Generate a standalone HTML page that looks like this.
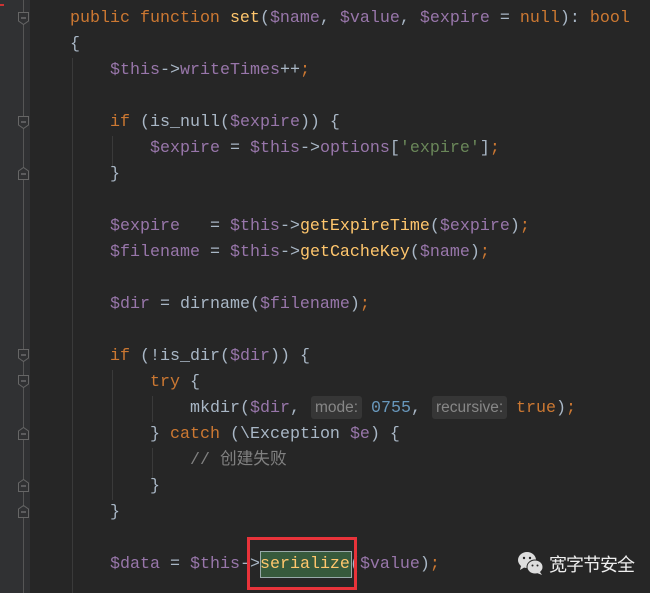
<!DOCTYPE html>
<html><head><meta charset="utf-8">
<style>
html,body{margin:0;padding:0}
body{width:650px;height:593px;background:#262626;position:relative;overflow:hidden;font-family:"Liberation Mono","Noto Sans CJK SC",monospace;font-size:16.67px;color:#a9b7c6}
.gut{position:absolute;left:0;top:0;width:30px;height:593px;background:#303133}
.fl{position:absolute;left:23px;top:0;width:1px;height:593px;background:#555}
.fm{position:absolute;left:18px;width:11px;height:13px}
.ig{position:absolute;width:1px;background:#3a3a3a}
.l{position:absolute;white-space:pre;height:26px;line-height:26px}
.k{color:#cc7832}.f{color:#ffc66d}.v{color:#9876aa}.s{color:#6a8759}.n{color:#6897bb}.c{color:#808080}
.h{display:inline-block;background:#363636;color:#878787;font-family:"Liberation Sans",sans-serif;font-size:15.5px;line-height:23px;padding:0 4px;border-radius:3px}
</style></head><body>
<div class="gut"></div>
<div class="fl"></div>
<svg width="0" height="0" style="position:absolute"><defs><g id="fo"><path d="M0.5 0.5H10.5V9L5.5 12.5L0.5 9Z" fill="#303133" stroke="#666"/><path d="M3 6H8" stroke="#888"/></g><g id="fc"><path d="M0.5 12.5H10.5V4L5.5 0.5L0.5 4Z" fill="#303133" stroke="#666"/><path d="M3 7H8" stroke="#888"/></g></defs></svg>
<svg class="fm" style="top:12px"><use href="#fo"/></svg>
<svg class="fm" style="top:116px"><use href="#fo"/></svg>
<svg class="fm" style="top:167px"><use href="#fc"/></svg>
<svg class="fm" style="top:349px"><use href="#fo"/></svg>
<svg class="fm" style="top:375px"><use href="#fo"/></svg>
<svg class="fm" style="top:427px"><use href="#fc"/></svg>
<svg class="fm" style="top:479px"><use href="#fc"/></svg>
<svg class="fm" style="top:505px"><use href="#fc"/></svg>
<div class="ig" style="left:72px;top:58px;height:535px"></div>
<div class="ig" style="left:112px;top:136px;height:30px"></div>
<div class="ig" style="left:112px;top:370px;height:130px"></div>
<div class="ig" style="left:152px;top:396px;height:26px"></div>
<div class="ig" style="left:152px;top:448px;height:30px"></div>
<div style="position:absolute;left:0;top:4px;width:4px;height:3px;border-top:2px solid #c33"></div>

<div class="l" style="left:70px;top:6px"><span class="k">public function </span><span class="f">set</span>(<span class="v">$name</span>, <span class="v">$value</span>, <span class="v">$expire</span> = <span class="k">null</span>): <span class="k">bool</span></div>
<div class="l" style="left:70px;top:32px">{</div>
<div class="l" style="left:110px;top:58px"><span class="v">$this</span>-&gt;<span class="v">writeTimes</span>++<span class="k">;</span></div>
<div class="l" style="left:110px;top:110px"><span class="k">if</span> (is_null(<span class="v">$expire</span>)) {</div>
<div class="l" style="left:150px;top:136px"><span class="v">$expire</span> = <span class="v">$this</span>-&gt;<span class="v">options</span>[<span class="s">'expire'</span>]<span class="k">;</span></div>
<div class="l" style="left:110px;top:162px">}</div>
<div class="l" style="left:110px;top:214px"><span class="v">$expire</span>   = <span class="v">$this</span>-&gt;<span class="f">getExpireTime</span>(<span class="v">$expire</span>)<span class="k">;</span></div>
<div class="l" style="left:110px;top:240px"><span class="v">$filename</span> = <span class="v">$this</span>-&gt;<span class="f">getCacheKey</span>(<span class="v">$name</span>)<span class="k">;</span></div>
<div class="l" style="left:110px;top:292px"><span class="v">$dir</span> = dirname(<span class="v">$filename</span>)<span class="k">;</span></div>
<div class="l" style="left:110px;top:344px"><span class="k">if</span> (!is_dir(<span class="v">$dir</span>)) {</div>
<div class="l" style="left:150px;top:370px"><span class="k">try</span> {</div>
<div class="l" style="left:190px;top:396px">mkdir(<span class="v">$dir</span>, </div>
<div class="l" style="left:311px;top:396px"><span class="h">mode:</span></div>
<div class="l" style="left:371px;top:396px"><span class="n">0755</span>, </div>
<div class="l" style="left:432px;top:396px"><span class="h">recursive:</span></div>
<div class="l" style="left:516px;top:396px"><span class="k">true</span>)<span class="k">;</span></div>
<div class="l" style="left:150px;top:422px">} <span class="k">catch</span> (\Exception <span class="v">$e</span>) {</div>
<div class="l" style="left:190px;top:448px"><span class="c">// 创建失败</span></div>
<div class="l" style="left:150px;top:474px">}</div>
<div class="l" style="left:110px;top:500px">}</div>
<div style="position:absolute;left:260px;top:551px;width:90px;height:25px;background:#375a3c;border:1px solid #9aa"></div>
<div class="l" style="left:110px;top:552px"><span class="v">$data</span> = <span class="v">$this</span>-&gt;<span class="f">serialize</span>(<span class="v">$value</span>)<span class="k">;</span></div>
<div style="position:absolute;left:247px;top:537px;width:104px;height:47px;border:3px solid #e8333a"></div>

<svg style="position:absolute;left:517px;top:551px" width="28" height="26" viewBox="0 0 28 26">
<ellipse cx="10" cy="9" rx="9" ry="8" fill="#ddd"/>
<path d="M4 15 L3 19 L8 16 Z" fill="#ddd"/>
<ellipse cx="18" cy="16" rx="8.5" ry="7.5" fill="#262626"/>
<ellipse cx="18" cy="16" rx="7.5" ry="6.5" fill="#ddd"/>
<path d="M23 21 L25 24 L20 22 Z" fill="#ddd"/>
<circle cx="7" cy="7" r="1.2" fill="#262626"/><circle cx="13" cy="7" r="1.2" fill="#262626"/>
<circle cx="15.5" cy="14.5" r="1" fill="#262626"/><circle cx="20.5" cy="14.5" r="1" fill="#262626"/>
</svg>
<div style="position:absolute;left:549px;top:551px;font-family:'Liberation Sans','Noto Sans CJK SC',sans-serif;font-size:18px;color:#eee;letter-spacing:-1px">宽字节安全</div>
</body></html>
